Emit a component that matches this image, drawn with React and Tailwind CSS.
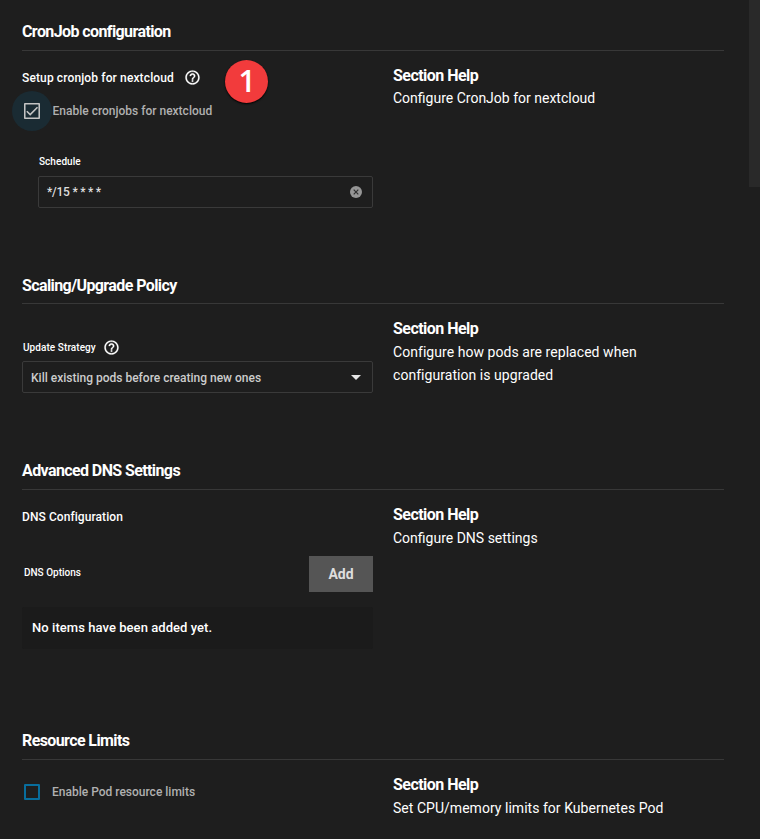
import React from "react";

function HelpIcon({ className = "" }) {
  return (
    <svg viewBox="0 0 24 24" className={"size-[17px] shrink-0 fill-white stroke-white stroke-[0.3] " + className}>
      <path d="M11 18h2v-2h-2v2zm1-16C6.48 2 2 6.48 2 12s4.48 10 10 10 10-4.480 10-10S17.520 2 12 2zm0 18c-4.410 0-8-3.590-8-8s3.590-8 8-8 8 3.590 8 8-3.590 8-8 8zm0-14c-2.210 0-4 1.790-4 4h2c0-1.100.9-2 2-2s2 .9 2 2c0 2-3 1.750-3 5h2c0-2.250 3-2.500 3-5 0-2.210-1.790-4-4-4z" />
    </svg>
  );
}

function Section({ title, titleClass = "pb-[6px]", helpTop = "pt-[13px]", className, children, help, helpClass = "" }) {
  return (
    <section className={"flex flex-col " + className}>
      <div className={"flex h-[51px] shrink-0 items-end border-b border-[#383838] " + titleClass}>
        <h2 className="text-[16px] font-bold leading-6 tracking-[-0.6px] whitespace-nowrap">{title}</h2>
      </div>
      <div className="flex gap-5">
        <div className="w-[351px] shrink-0">{children}</div>
        <div className={helpTop}>
          <h3 className="text-[16px] font-bold leading-6 tracking-[-0.53px] whitespace-nowrap">Section Help</h3>
          <p className={"text-[14px] leading-[23px] whitespace-nowrap " + helpClass}>{help}</p>
        </div>
      </div>
    </section>
  );
}

export default function App() {
  return (
    <div className="flex h-[839px] w-[760px] overflow-hidden bg-[#1e1e1e] pl-[22px] font-[Roboto,'Liberation_Sans',sans-serif] text-white">
      <main className="w-[702px] shrink-0">
        <Section title="CronJob configuration" className="h-[253px]" helpClass="-mt-px" help="Configure CronJob for nextcloud">
          <div className="flex h-[43px] items-start pt-[5px]">
            <span className="w-[152px] shrink-0 pt-[13px] text-[12px] font-medium leading-[18px] tracking-[0.13px] whitespace-nowrap">Setup cronjob for nextcloud</span>
            <HelpIcon className="mt-[13px] ml-[10px]" />
            <span className="ml-[24px] mt-1 flex size-[43px] shrink-0 items-center justify-center rounded-full bg-[#f23b3c] pl-px pb-[2px] font-['Open_Sans'] text-[30px] font-semibold leading-none shadow-[0_1px_2px_#000]">1</span>
          </div>
          <label className="-ml-[10px] -mt-[3px] flex h-10 items-center text-[12px] font-medium text-[#b0b0b0]">
            <span className="flex size-10 shrink-0 items-center justify-center rounded-full bg-[#1a2b33]">
              <svg viewBox="0 0 16 16" className="size-4 fill-none stroke-[#c4c4c4]">
                <rect x="0.75" y="0.75" width="14.5" height="14.500" rx="0.5" strokeWidth="1.6" />
                <path d="M2.800 8.200L6.200 11.600L13.500 4.200" strokeWidth="1.6" />
              </svg>
            </span>
            <span className="ml-[0.5px] whitespace-nowrap">Enable cronjobs for nextcloud</span>
          </label>
          <div className="ml-4 mt-[22px]">
            <div className="ml-px h-[23px] text-[10px] font-medium leading-[18px] tracking-[0.05px]">Schedule</div>
            <div className="flex h-8 items-center justify-between rounded-[2px] border border-[#3a3a3a] pl-2 pr-[10px] text-[12px] font-medium text-[#dedede]">
              <span className="tracking-[-0.25px]">*/15 * * * *</span>
              <svg viewBox="0 0 12 12" className="size-3">
                <circle cx="6" cy="6" r="6" fill="#969696" />
                <path d="M3.700 3.700L8.300 8.300M8.300 3.700L3.700 8.300" stroke="#303030" strokeWidth="1.2" />
              </svg>
            </div>
          </div>
        </Section>
        <Section title="Scaling/Upgrade Policy" titleClass="pb-[5px]" className="h-[186px]" helpClass="tracking-[0.05px]" help={<>Configure how pods are replaced when<br />configuration is upgraded</>}>
          <div className="flex h-[57px] items-start pt-[35px] pl-px">
            <span className="w-[73px] shrink-0 text-[10px] font-medium leading-[18px] tracking-[0.07px] whitespace-nowrap">Update Strategy</span>
            <HelpIcon className="ml-[7px]" />
          </div>
          <div className="flex h-8 items-center justify-between rounded-[2px] border border-[#3a3a3a] pl-2 pr-[11px] text-[12px] font-medium text-[#cccccc]">
            <span className="pt-px">Kill existing pods before creating new ones</span>
            <svg viewBox="0 0 10 5" className="h-[5px] w-[10px] fill-[#e6e6e6]"><path d="M0 0h10L5 5z" /></svg>
          </div>
        </Section>
        <Section title="Advanced DNS Settings" className="h-[270px]" help="Configure DNS settings">
          <div className="h-[66px] pt-[18px] text-[12px] font-medium leading-[18px] tracking-[0.07px]">DNS Configuration</div>
          <div className="flex h-9 items-center justify-between pl-[2px]">
            <span className="pb-[3px] text-[10px] font-medium">DNS Options</span>
            <button className="h-9 w-16 bg-[#555555] text-[14px] font-bold text-[#dddddd]">Add</button>
          </div>
          <div className="mt-[15px] flex h-[42px] items-center rounded-[2px] bg-[#1b1b1b] pl-[10px] text-[13px] font-medium tracking-[0.06px]">No items have been added yet.</div>
        </Section>
        <Section title="Resource Limits" className="h-[130px]" helpClass="tracking-[0.03px]" help="Set CPU/memory limits for Kubernetes Pod">
          <label className="mt-3 flex h-10 items-center pl-[2px] text-[12px] font-medium text-[#b0b0b0]">
            <span className="mr-3 size-4 rounded-[1px] border-2 border-[#086d9c]" />
            Enable Pod resource limits
          </label>
        </Section>
      </main>
      <aside className="ml-[25px] h-[187px] w-[11px] bg-[#292929]" />
    </div>
  );
}
